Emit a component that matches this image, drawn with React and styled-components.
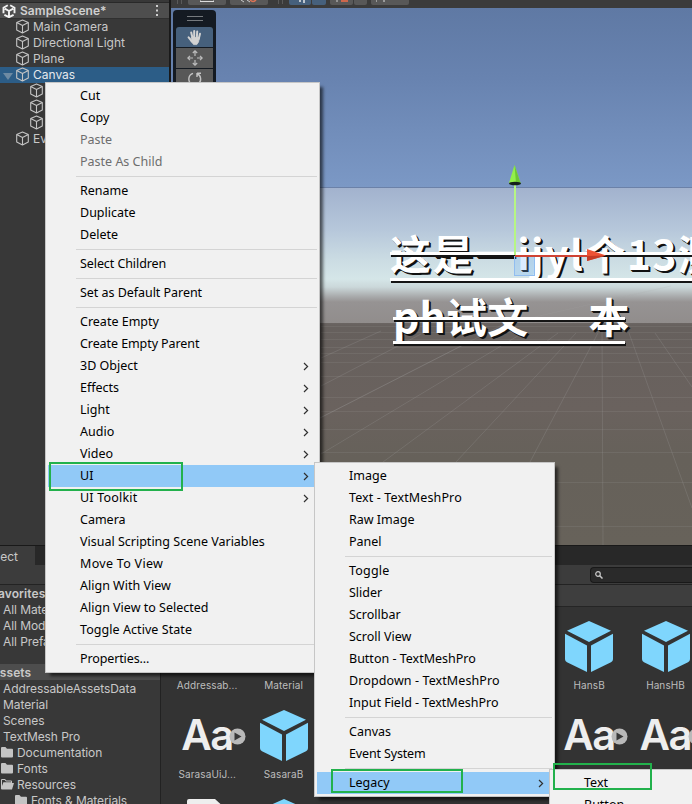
import React from 'react';
import styled, { createGlobalStyle } from 'styled-components';

const GlobalStyle = createGlobalStyle`
  * { box-sizing: border-box; }
  body { margin: 0; overflow: hidden; background: #383838; font-family: Inter, sans-serif; }
`;

const Window = styled.main`
  position: relative;
  display: grid;
  grid-template-rows: 545px 259px;
  width: 692px;
  height: 804px;
  overflow: hidden;
  color: #c8c8c8;
  font-size: 12px;
  background: #191919;
`;

const UpperArea = styled.section`
  display: grid;
  grid-template-columns: 169px 1fr;
  column-gap: 2px;
  min-height: 0;
`;

/* ---------- Hierarchy ---------- */

const Hierarchy = styled.div`
  background: #383838;
  padding-top: 2px;
`;

const SceneHeader = styled.div`
  display: flex;
  align-items: center;
  height: 17px;
  padding: 0 10px 0 2px;
  border-top: 1px solid #292929;
  border-bottom: 1px solid #303030;
  background: #4e4e4e;
  color: #d0d0d0;
  font-weight: 600;
  letter-spacing: 0.05px;
  svg:last-child { margin-left: auto; }
`;

const SceneTitle = styled.span`
  margin-left: 4px;
`;

const TreeRow = styled.div`
  display: flex;
  align-items: center;
  height: 16px;
  padding: 0 0 1px ${(p) => 15 + p.$depth * 14}px;
  background: ${(p) => (p.$selected ? '#2c5d87' : 'transparent')};
  color: ${(p) => (p.$selected ? '#e4e8ec' : '#c8c8c8')};
  white-space: nowrap;
`;

const TreeLabel = styled.span`
  margin-left: 3px;
`;

const Foldout = styled.span`
  width: 0;
  height: 0;
  margin: 3px 2px 0 -12px;
  border: 5px solid transparent;
  border-top: 7px solid #6d8aa3;
  border-bottom: 0;
`;

/* ---------- Scene view ---------- */

const SceneColumn = styled.div`
  display: grid;
  grid-template-rows: 8px 1fr;
  min-width: 0;
`;

const SceneToolbar = styled.div`
  display: flex;
  height: 8px;
  padding-left: 6px;
  background: #3b3b3b;
`;

const Grip = styled.span`
  width: 5px;
  height: 4px;
  margin-right: ${(p) => p.$gap}px;
  border: solid #5a5a5a;
  border-width: 0 1px;
`;

const ToolButton = styled.span`
  display: flex;
  justify-content: center;
  width: ${(p) => p.$w}px;
  height: 5px;
  margin-right: ${(p) => p.$gap}px;
  border-radius: 0 0 2px 2px;
  background: ${(p) => (p.$on ? '#46607c' : '#585858')};
`;

const Viewport = styled.div`
  position: relative;
  overflow: hidden;
  background: linear-gradient(
    #5f79a4 0px, #6883b0 70px, #7b98c5 178px, #9eb6d4 230px,
    #cfdfe3 272px, #8e8b8a 295px, #66605d 318px, #6a625e 400px, #66615a 450px, #67625a 537px
  );
`;

const CanvasArea = styled.div`
  position: absolute;
  inset: 179px 0 auto 0;
  height: 136px;
  border-top: 1px solid #6b81a8;
  background: linear-gradient(
    #a2b2ce 0px, #b5c6da 40px, #cbdce3 72px, #d5e6e8 91px,
    #cbd8da 99px, #a7a8a9 109px, #969393 114px, #918d8c 135px
  );
`;

const Overlay = styled.svg`
  position: absolute;
  inset: 0;
`;

const CanvasText = styled.div`
  position: absolute;
  top: 223px;
  left: 219px;
  color: #fff;
  font: 700 41px/43px "Noto Sans CJK SC", sans-serif;
  text-shadow: 1px 1px 0 #111, 2px 2px 0 #111;
  white-space: pre;
`;

const CanvasLine = styled.div`
  position: relative;
  width: ${(p) => p.$w}px;
  height: 63px;
  margin-left: ${(p) => p.$indent || 0}px;
  letter-spacing: ${(p) => p.$spacing || 0}px;
  word-spacing: ${(p) => p.$words || 0}px;
  &::before, &::after {
    content: '';
    position: absolute;
    left: 0;
    right: 0;
    height: 3px;
    background: #fff;
    box-shadow: 1px 2px 0 #151515;
  }
  &::before { top: ${(p) => p.$strike}px; }
  &::after { top: 47px; }
`;

const Palette = styled.div`
  position: absolute;
  top: 2px;
  left: 2px;
  display: flex;
  flex-direction: column;
  gap: 1px;
  width: 43px;
  padding: 0 3px 4px;
  border-radius: 4px;
  background: #141a22;
`;

const PaletteGrip = styled.span`
  align-self: center;
  width: 16px;
  height: 5px;
  margin: 6px 0 5px;
  border: solid #767a7e;
  border-width: 1px 0;
`;

const PaletteButton = styled.span`
  display: grid;
  place-items: center;
  height: 20px;
  border-radius: ${(p) => (p.$on ? '3px 3px 0 0' : '0')};
  background: ${(p) => (p.$on ? '#46607c' : '#585858')};
`;

/* ---------- Project ---------- */

const Project = styled.section`
  display: grid;
  grid-template-rows: 19px 20px 1fr;
  min-height: 0;
  padding-top: 1px;
`;

const TabStrip = styled.div`
  background: #282828;
`;

const Tab = styled.div`
  width: 35px;
  height: 20px;
  overflow: hidden;
  background: #3c3c3c;
  line-height: 21px;
  direction: rtl;
  padding-right: 17px;
  white-space: nowrap;
`;

const SearchBar = styled.div`
  display: flex;
  justify-content: flex-end;
  align-items: center;
  padding-top: 1px;
  border-bottom: 1px solid #232323;
  background: #3c3c3c;
`;

const SearchField = styled.div`
  display: flex;
  align-items: center;
  width: 102px;
  height: 16px;
  padding-left: 4px;
  border: 1px solid #191919;
  border-right: 0;
  border-radius: 4px 0 0 4px;
  background: #2a2a2a;
`;

const ProjectBody = styled.div`
  display: grid;
  grid-template-columns: 160px 1fr;
  column-gap: 1px;
  min-height: 0;
  overflow: hidden;
  background: #222;
`;

const FolderTree = styled.div`
  overflow: hidden;
  background: #383838;
`;

const FolderRow = styled.div`
  display: flex;
  align-items: center;
  gap: 3px;
  height: 16px;
  margin-bottom: ${(p) => p.$after || 0}px;
  padding-left: ${(p) => p.$x}px;
  background: ${(p) => (p.$root ? '#4d4d4d' : 'transparent')};
  font-weight: ${(p) => (p.$bold ? 600 : 400)};
  letter-spacing: ${(p) => (p.$bold ? 0.1 : -0.08)}px;
  white-space: nowrap;
`;

const FolderText = styled.span`
  margin-left: ${(p) => p.$shift || 0}px;
`;

const Assets = styled.div`
  overflow: hidden;
  background: #333;
`;

const Breadcrumb = styled.div`
  height: 22px;
  border-bottom: 1px solid #252525;
  background: #3e3e3e;
`;

const AssetGrid = styled.div`
  display: grid;
  grid-template-columns: repeat(7, 76.4px);
  grid-auto-rows: 89px;
  padding: 6px 0 0 8px;
`;

const AssetCell = styled.div`
  grid-column: ${(p) => p.$col};
  grid-row: ${(p) => p.$row};
  display: grid;
  grid-template-rows: 66px 12px;
  justify-items: center;
  align-items: center;
  align-content: start;
`;

const AssetName = styled.span`
  color: #bdbdbd;
  font-size: 10px;
  letter-spacing: 0.1px;
`;

const FontPreview = styled.div`
  position: relative;
  width: 60px;
  color: #eee;
  font: 600 42px/62px Inter, sans-serif;
  letter-spacing: -1.5px;
  padding-left: 4px;
  svg { position: absolute; right: -9px; top: 24px; }
`;

/* ---------- Menus ---------- */

const Menu = styled.div`
  position: absolute;
  left: ${(p) => p.$x}px;
  top: ${(p) => p.$y}px;
  width: ${(p) => p.$w}px;
  padding: 2px;
  border: 1px solid #c6c6c6;
  background: #f1f1f1;
  box-shadow: 4px 4px 3px -1px rgba(0, 0, 0, 0.6);
  color: #000;
  font: 12.5px/22px "Noto Sans", sans-serif;
`;

const MenuItem = styled.div`
  display: flex;
  align-items: center;
  justify-content: space-between;
  height: 22px;
  padding: 0 8px 0 32px;
  background: ${(p) => (p.$active ? '#91c9f7' : 'transparent')};
  color: ${(p) => (p.$disabled ? '#6d6d6d' : '#000')};
  letter-spacing: ${(p) => p.$tracking || 0}px;
  white-space: nowrap;
`;

const Separator = styled.hr`
  height: 1px;
  margin: 3px 0 3px 28px;
  border: 0;
  background: #d4d4d4;
`;

const Highlight = styled.div`
  position: absolute;
  left: ${(p) => p.$x}px;
  top: ${(p) => p.$y}px;
  width: ${(p) => p.$w}px;
  height: ${(p) => p.$h}px;
  border: 2px solid #22b14c;
`;

/* ---------- Icons ---------- */

const CubeOutline = () => (
  <svg width="15" height="15" viewBox="0 0 15 15" fill="none" stroke="#c4c4c4" strokeWidth="1.1" strokeLinejoin="round">
    <path d="M7.5 1 13.3 3.6V11L7.5 14 1.7 11V3.6ZM1.7 3.6 7.5 6.6 13.3 3.6M7.5 6.6V14" />
  </svg>
);

const UnityLogo = () => (
  <svg width="14" height="14" viewBox="0 0 14 14" fill="none" stroke="#f2f2f2" strokeWidth="1.9">
    <path d="M5.8 1.3 1.5 3.8V9.2M8.2 1.3l4.3 2.5V9.2M2.4 10.8 7 13.2l4.6-2.4M7 7v5.5M7 7 2.8 4.7M7 7l4.2-2.3" />
  </svg>
);

const MoreDots = () => (
  <svg width="4" height="13" viewBox="0 0 4 13" fill="#d0d0d0">
    <path d="M1 1h2v2H1zM1 5.5h2v2H1zM1 10h2v2H1z" />
  </svg>
);

const HandIcon = () => (
  <svg width="16" height="17" viewBox="0 0 16 17" fill="none" stroke="#d2d2d2" strokeLinecap="round">
    <path d="M4.2 3.5 5.5 9M7.2 2v7M10.2 2.5 9.8 9M13 4.8 11.7 10M1.6 8.3 5 12.5" strokeWidth="2" />
    <path d="M4.6 8.5h7.8l-.9 4.5-1.7 2.6H6.6L4 12.2Z" fill="#d2d2d2" strokeWidth=".8" />
  </svg>
);

const MoveIcon = () => (
  <svg width="16" height="16" viewBox="0 0 16 16" fill="none" stroke="#bcbcbc" strokeWidth="1.2">
    <path d="M8 1v5M8 10v5M1 8h5M10 8h5M5.8 3 8 .8 10.2 3M5.8 13 8 15.2 10.2 13M3 5.8.8 8 3 10.2M13 5.8 15.2 8 13 10.2" />
  </svg>
);

const RotateIcon = () => (
  <svg width="16" height="16" viewBox="0 0 16 16" fill="none" stroke="#c4c4c4" strokeWidth="1.4">
    <path d="M6 2.3A6 6 0 0 0 4.5 13M10 2v4M10 2.3h4M10 2.5A6 6 0 0 1 11 13" />
  </svg>
);

const FolderIcon = ({ open }) => (
  <svg width="13" height="11" viewBox="0 0 13 11" fill="#c4c4c4">
    {open ? (
      <path d="M0 1q0-1 1-1h3l1.4 1.5H10q1 0 1 1V4h2l-2 6.5H1q-1 0-1-1ZM1 1v6l1.4-3.8H10V2.4H5L3.6 1Z" fillRule="evenodd" />
    ) : (
      <path d="M0 1q0-1 1-1h3.4L6 1.7h5q1 0 1 1V9.5q0 1-1 1H1q-1 0-1-1Z" />
    )}
  </svg>
);

const PrefabCube = () => (
  <svg width="50" height="53" viewBox="0 0 50 54" preserveAspectRatio="none" fill="#7fd6fd">
    <path d="M25 1 47 11 25 22.5 3 11ZM1 14 23 26V53L3 43Q1 42 1 40ZM49 14 27 26V53L47 43Q49 42 49 40Z" />
  </svg>
);

const PlayBadge = () => (
  <svg width="17" height="17" viewBox="0 0 17 17">
    <circle cx="8.5" cy="8.5" r="8" fill="#b9b9b9" />
    <path d="M5.5 4.5 12.5 8.5 5.5 12.5Z" fill="#383838" />
  </svg>
);

const SearchIcon = () => (
  <svg width="8" height="8" viewBox="0 0 8 8" fill="none" stroke="#c8c8c8" strokeWidth="1.2">
    <circle cx="3" cy="3" r="2.3" />
    <path d="M4.7 4.7 7.5 7.5" strokeWidth="1.5" />
  </svg>
);

const Chevron = () => (
  <svg width="6" height="9" viewBox="0 0 6 9" fill="none" stroke="#303030" strokeWidth="1.2">
    <path d="M1 1 4.6 4.5 1 8" />
  </svg>
);

const DocumentIcon = () => (
  <svg width="40" height="50" viewBox="0 0 40 50">
    <path d="M2 0H28L40 11V50H0V2Q0 0 2 0Z" fill="#eee" />
  </svg>
);

/* Floor grid drawn in perspective. */
const FloorGrid = () => (
  <g fill="none" stroke="#aaa" strokeOpacity=".2" strokeWidth="1">
    <path d="M150 318.5H521M150 324.5H521M150 331.5H521M150 339.5H521M150 345.5H521M150 354.5H521M150 368.5H521M150 389.5H521M150 403.5H521M150 421.5H521M150 444.5H521M150 474.5H521M150 518.5H521" opacity=".7" />
    <path d="M149 410 300 333M150 446 350 326M212 454 387 325M285 454 405 325M359 454 427 325M431 315 432 537M458 325 521 500M484 325 521 379M150 378 250 326M150 350 210 323" />
    <path d="M100 435 333 316 500 278" opacity=".7" />
  </g>
);

const Gizmo = () => (
  <>
    <rect x="343.5" y="248.5" width="20" height="19" fill="#6bb5ff" fillOpacity=".25" stroke="#91bdf0" />
    <path d="M344 248H417" stroke="#cf4334" strokeWidth="2" />
    <path d="M344 177V247" stroke="#b6f584" strokeWidth="2" />
    <path d="M416 241V253L435 247.5Z" fill="#ee5335" />
    <path d="M416 248 435 247.5 416 253Z" fill="#c53c26" />
    <path d="M343.5 157 338 175H349.5Z" fill="#92f04a" />
    <path d="M343.5 157 345 175H349.5Z" fill="#6ec634" />
    <ellipse cx="344" cy="175.5" rx="6" ry="1.7" fill="#15201a" />
  </>
);

/* ---------- Data ---------- */

const SEP = { separator: true };
const objectMenu = [
  { label: 'Cut' }, { label: 'Copy' },
  { label: 'Paste', disabled: true }, { label: 'Paste As Child', disabled: true }, SEP,
  { label: 'Rename' }, { label: 'Duplicate' }, { label: 'Delete' }, SEP,
  { label: 'Select Children', tracking: -0.08 }, SEP,
  { label: 'Set as Default Parent', tracking: -0.04 }, SEP,
  { label: 'Create Empty' }, { label: 'Create Empty Parent', tracking: -0.08 },
  { label: '3D Object', sub: true }, { label: 'Effects', sub: true }, { label: 'Light', sub: true },
  { label: 'Audio', sub: true }, { label: 'Video', sub: true },
  { label: 'UI', sub: true, active: true }, { label: 'UI Toolkit', sub: true, tracking: 0.2 },
  { label: 'Camera' }, { label: 'Visual Scripting Scene Variables' }, { label: 'Move To View', tracking: 0.3 },
  { label: 'Align With View' }, { label: 'Align View to Selected' }, { label: 'Toggle Active State', tracking: 0.06 }, SEP,
  { label: 'Properties...', tracking: -0.12 },
];
const uiMenu = [
  { label: 'Image' }, { label: 'Text - TextMeshPro', tracking: 0.12 }, { label: 'Raw Image' }, { label: 'Panel' }, SEP,
  { label: 'Toggle', tracking: 0.2 }, { label: 'Slider' }, { label: 'Scrollbar' }, { label: 'Scroll View' },
  { label: 'Button - TextMeshPro' }, { label: 'Dropdown - TextMeshPro', tracking: 0.1 }, { label: 'Input Field - TextMeshPro' }, SEP,
  { label: 'Canvas' }, { label: 'Event System', tracking: -0.15 }, SEP,
  { label: 'Legacy', sub: true, active: true },
];
const legacyMenu = [{ label: 'Text' }, { label: 'Button' }];

const hierarchy = [
  { label: 'Main Camera', depth: 0 }, { label: 'Directional Light', depth: 0 }, { label: 'Plane', depth: 0 },
  { label: 'Canvas', depth: 0, selected: true },
  { label: '', depth: 1 }, { label: '', depth: 1 }, { label: '', depth: 1 },
  { label: 'EventSystem', depth: 0 },
];

const folders = [
  { label: 'Favorites', x: -9, bold: true },
  { label: 'All Materials', x: 3 }, { label: 'All Models', x: 3 }, { label: 'All Prefabs', x: 3, after: 15 },
  { label: 'Assets', x: -9, bold: true, root: true },
  { label: 'AddressableAssetsData', x: 3 }, { label: 'Material', x: 3 }, { label: 'Scenes', x: 3 },
  { label: 'TextMesh Pro', x: 3 },
  { label: 'Documentation', x: 1, icon: 'closed' }, { label: 'Fonts', x: 1, icon: 'closed' },
  { label: 'Resources', x: 1, icon: 'open' }, { label: 'Fonts & Materials', x: 15, icon: 'closed' },
];

const assets = [
  { name: 'Addressab...', col: 1, row: 1 }, { name: 'Material', col: 2, row: 1 },
  { name: 'HansB', col: 6, row: 1, kind: 'cube' }, { name: 'HansHB', col: 7, row: 1, kind: 'cube' },
  { name: 'SarasaUiJ...', col: 1, row: 2, kind: 'font' }, { name: 'SasaraB', col: 2, row: 2, kind: 'cube' },
  { name: '', col: 6, row: 2, kind: 'font' }, { name: '', col: 7, row: 2, kind: 'font' },
  { name: '', col: 1, row: 3, kind: 'doc' }, { name: '', col: 2, row: 3, kind: 'cube' },
];

const ContextMenu = ({ items, ...place }) => (
  <Menu {...place}>
    {items.map((item, i) =>
      item.separator ? (
        <Separator key={i} />
      ) : (
        <MenuItem key={i} $active={item.active} $disabled={item.disabled} $tracking={item.tracking}>
          {item.label}
          {item.sub && <Chevron />}
        </MenuItem>
      )
    )}
  </Menu>
);

const AssetArt = ({ kind }) => {
  if (kind === 'cube') return <PrefabCube />;
  if (kind === 'font') return <FontPreview>Aa<PlayBadge /></FontPreview>;
  if (kind === 'doc') return <DocumentIcon />;
  return <span />;
};

export default function App() {
  return (
    <Window>
      <GlobalStyle />
      <UpperArea>
        <Hierarchy>
          <SceneHeader>
            <UnityLogo />
            <SceneTitle>SampleScene*</SceneTitle>
            <MoreDots />
          </SceneHeader>
          {hierarchy.map((node, i) => (
            <TreeRow key={i} $depth={node.depth} $selected={node.selected}>
              {node.selected && <Foldout />}
              <CubeOutline />
              <TreeLabel>{node.label}</TreeLabel>
            </TreeRow>
          ))}
        </Hierarchy>
        <SceneColumn>
          <SceneToolbar>
            <Grip $gap={6} />
            <ToolButton $w={38} $gap={4}>
              <svg width="14" height="2"><path d="M0 0V1.5H14V0" fill="none" stroke="#ddd" /></svg>
            </ToolButton>
            <ToolButton $w={38} $gap={10}>
              <svg width="20" height="3"><path d="M2 0 5 2M8 0 11 2" stroke="#ccc" /><path d="M11 0Q14 3 17 0" fill="none" stroke="#dc7355" strokeWidth="1.5" /></svg>
            </ToolButton>
            <Grip $gap={6} />
            <ToolButton $w={22} $gap={1} $on>
              <svg width="12" height="3"><path d="M6 0V2M10 0V3" stroke="#e8e8e8" strokeWidth="1.5" /></svg>
            </ToolButton>
            <ToolButton $w={14} $gap={4} $on />
            <ToolButton $w={23} $gap={1}>
              <svg width="12" height="3"><path d="M1 0V2" stroke="#ccc" /><path d="M5 0H12V2H5" fill="#cc674c" /></svg>
            </ToolButton>
            <ToolButton $w={13} $gap={4} />
            <ToolButton $w={38} $gap={0}>
              <svg width="28" height="2"><path d="M0 0V2M8 0V2" stroke="#ddd" /></svg>
            </ToolButton>
          </SceneToolbar>
          <Viewport>
            <CanvasArea />
            <Overlay width="521" height="537"><FloorGrid /></Overlay>
            <CanvasText>
              <CanvasLine $w={310} $spacing={1.4} $strike={21}>这是一ijyl个13测</CanvasLine>
              <CanvasLine $w={232} $indent={3} $spacing={0.2} $words={5.5} $strike={23}>ph试文{'    '}本</CanvasLine>
            </CanvasText>
            <Overlay width="521" height="537"><Gizmo /></Overlay>
            <Palette>
              <PaletteGrip />
              <PaletteButton $on><HandIcon /></PaletteButton>
              <PaletteButton><MoveIcon /></PaletteButton>
              <PaletteButton><RotateIcon /></PaletteButton>
            </Palette>
          </Viewport>
        </SceneColumn>
      </UpperArea>

      <Project>
        <TabStrip><Tab>Project</Tab></TabStrip>
        <SearchBar><SearchField><SearchIcon /></SearchField></SearchBar>
        <ProjectBody>
          <FolderTree>
            {folders.map((f) => (
              <FolderRow key={f.label} $x={Math.max(f.x, 0)} $bold={f.bold} $root={f.root} $after={f.after}>
                {f.icon && <FolderIcon open={f.icon === 'open'} />}
                <FolderText $shift={Math.min(f.x, 0)}>{f.label}</FolderText>
              </FolderRow>
            ))}
          </FolderTree>
          <Assets>
            <Breadcrumb />
            <AssetGrid>
              {assets.map((a, i) => (
                <AssetCell key={i} $col={a.col} $row={a.row}>
                  <AssetArt kind={a.kind} />
                  <AssetName>{a.name}</AssetName>
                </AssetCell>
              ))}
            </AssetGrid>
          </Assets>
        </ProjectBody>
      </Project>

      <ContextMenu $x={45} $y={82} $w={275} items={objectMenu} />
      <ContextMenu $x={314} $y={462} $w={241} items={uiMenu} />
      <ContextMenu $x={549} $y={769} $w={200} items={legacyMenu} />
      <Highlight $x={49} $y={462} $w={134} $h={29} />
      <Highlight $x={331} $y={769} $w={132} $h={24} />
      <Highlight $x={553} $y={763} $w={99} $h={27} />
    </Window>
  );
}
